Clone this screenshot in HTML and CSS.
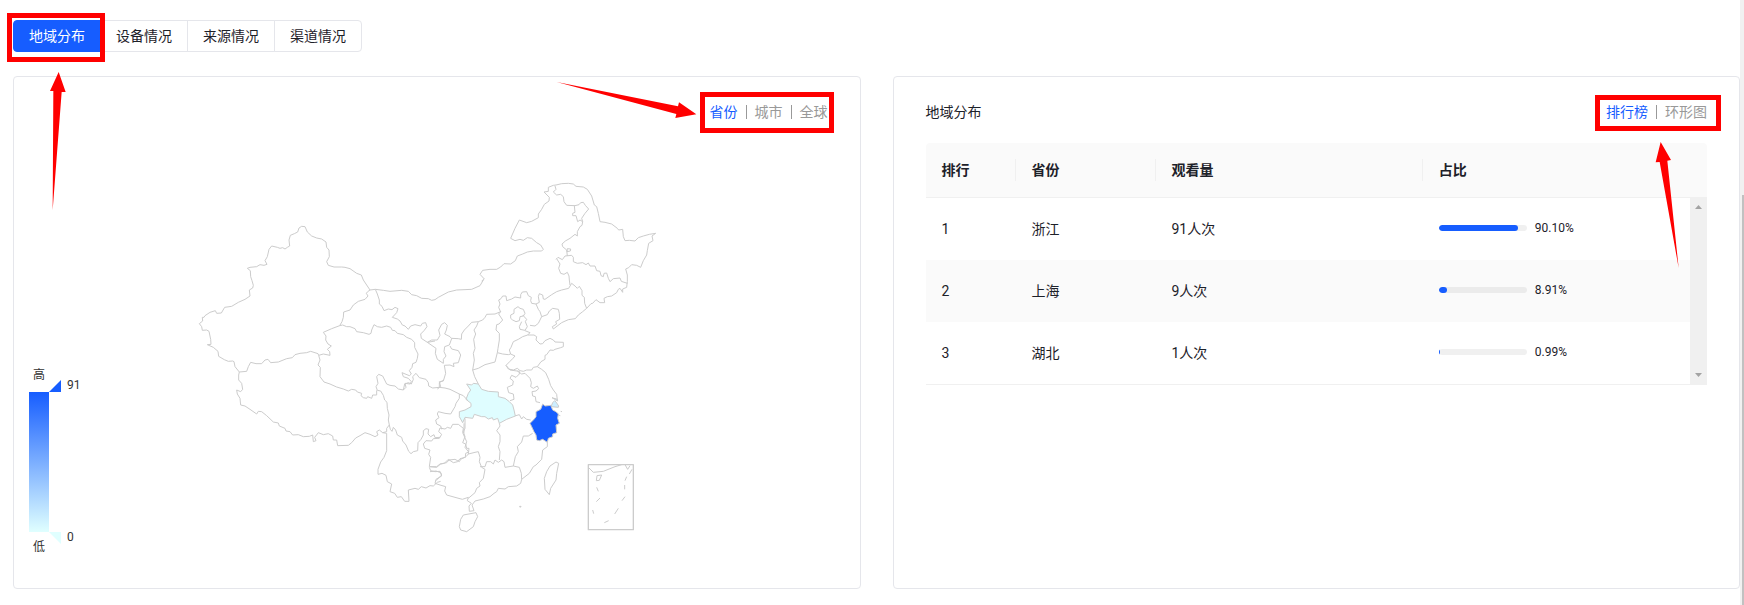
FILE: index.html
```html
<!DOCTYPE html>
<html lang="zh-CN">
<head>
<meta charset="utf-8">
<title>地域分布</title>
<link rel="stylesheet" href="styles.css">
</head>
<body>
<div class="page">
<main class="content">
  <nav class="tabs" aria-label="数据维度">
    <button class="tab tab-active" type="button">地域分布</button>
    <button class="tab" type="button">设备情况</button>
    <button class="tab" type="button">来源情况</button>
    <button class="tab" type="button">渠道情况</button>
    <svg class="mark mark-tabs" width="98" height="198" viewBox="21 39 294 594" aria-hidden="true">
      <rect x="28.5" y="46.5" width="279" height="132"/>
      <path d="M176 216L150 273L160 273L158 630L185 276L197 276Z"/>
    </svg>
  </nav>

  <div class="cards">
    <section class="card">
      <header class="card-head">
        <div class="switch">
          <button class="switch-item switch-on" type="button">省份</button>
          <button class="switch-item" type="button">城市</button>
          <button class="switch-item" type="button">全球</button>
        </div>
        <svg class="mark mark-map" width="279" height="53" viewBox="45 60 837 159" aria-hidden="true">
          <rect x="487.5" y="103.5" width="387" height="108"/>
          <path d="M469 163L406 174L409 162L50 66L414 139L417 127Z"/>
        </svg>
      </header>
      <div class="chart">
        <svg class="legend" width="60" height="190" viewBox="0 0 60 190">
          <defs>
            <linearGradient id="scale" x1="0" y1="0" x2="0" y2="1">
              <stop offset="0" stop-color="#165dff"/>
              <stop offset="1" stop-color="#e0ffff"/>
            </linearGradient>
          </defs>
          <rect x="0" y="26" width="20" height="140" fill="url(#scale)"/>
          <path d="M20 26L32 14V26Z" fill="#165dff"/>
          <path d="M20 166H32V178Z" fill="#e0ffff"/>
          <text x="4" y="13">高</text>
          <text x="4" y="185">低</text>
          <text x="38" y="23">91</text>
          <text x="38" y="175">0</text>
        </svg>
        <svg class="map" width="480" height="370" viewBox="21 0 1440 1110" role="img" aria-label="中国地图">
          <g transform="translate(0 120)">
            <path d="M345 50L335 49 327 54 323 66 313 71 301 76 297 90 299 108 292 112 285 117 278 113 270 115 262 112 245 108 237 118 232 140 225 152 231 163 222 166 210 164 200 170 180 172 172 175 181 182 182 200 186 212 190 226 188 234 178 240 180 258 165 268 145 277 125 289 104 292 94 309 80 310 76 302 60 307 45 317 42 322 37 322 38 333 28 341 35 350 37 361 50 360 57 364 62 388 63 403 52 404 70 412 84 424 86 439 103 449 115 454 128 453 132 455 135 470 148 486 170 484 175 470 182 457 198 461 215 461 225 450 234 448 242 458 265 456 290 446 307 443 315 434 330 430 350 428 362 424 384 431 386 436 400 432 420 436 419 425 412 418 424 408 414 402 407 390 408 378 400 367 425 356 449 347 456 335 460 322 461 306 480 300 490 285 505 274 525 268 534 258 529 250 533 245 540 240 530 225 520 210 514 195 500 190 480 176 465 172 455 171 432 171 415 166 410 155 418 140 417 120 410 112 408 96 395 87 380 84 365 78 352 66Z"/>
            <path d="M148 486L146 495 146 510 155 520 158 538 152 545 140 540 142 552 150 565 152 585 165 588 180 598 200 612 205 604 215 605 230 617 250 636 265 639 268 648 285 655 288 663 300 665 308 675 325 674 340 680 358 679 368 675 370 695 378 692 374 682 385 668 400 674 415 671 428 678 430 690 440 690 443 707 475 706 485 698 497 684 510 677 525 668 540 673 555 680 564 675 560 665 568 660 578 668 590 670"/>
            <path d="M386 436L390 450 384 465 391 472 390 500 402 516 420 522 440 531 460 537 475 543 485 538 497 540 502 546 515 550 513 557 520 563 530 565 533 560 545 565 548 555 560 555 560 541"/>
            <path d="M449 347L458 345 470 350 480 350 495 356 500 365 520 368 537 373 543 370 545 360 552 344 562 350 575 352 590 348 602 352 607 361 615 362 622 370 640 374 650 382 665 388 674 398 674 412 684 432 682 445 678 457 668 461 666 472 658 482 664 492 658 497 636 488 640 500 655 505 664 515 660 522 645 520 648 532 640 540 625 537 615 528 600 526 590 522 578 498 566 493 560 500 564 520 558 530 562 541 572 543 580 556 584 570 591 577 592 595 597 615 595 630 598 645 590 655 590 665 578 668"/>
            <path d="M598 645L601 658 606 664 610 652 617 660 622 675 635 682 638 693 648 705 656 724 663 731 670 725 683 722 684 698 693 688 700 675 700 662 708 656 716 658 714 672 722 680 732 674 735 683 750 682"/>
            <path d="M540 240L556 238 562 252 568 270 568 282 576 289 582 302 595 297 606 299 615 292 624 296 620 308 607 322 622 327 630 333 637 345 645 348 655 358 662 348 675 344 692 348 697 340 707 338 711 350 702 362 692 372 694 385 712 397 735 393"/>
            <path d="M556 238L580 241 600 244 635 241 655 244 665 254 680 257 695 265 715 266 725 271 735 269 745 262 775 246 800 240 845 238 870 227 880 210"/>
          </g>
          <g transform="translate(900 0)">
            <path d="M-25 333L-17 327-30 313-22 301 0 298 20 298 32 291 42 281 62 282 76 272 82 258 98 252 112 246 130 243 155 243 160 238 152 225 140 218 125 205 112 203 100 211 90 208 75 212 62 205 75 175 88 150 110 158 125 154 145 143 145 132 155 118 163 103 177 93 178 82 162 66 175 64 175 52 190 46 198 45 215 41 235 40 250 42 258 49 280 51 292 58 305 78 313 105 320 110 325 130 330 155 345 157 365 162 382 175 386 180 398 178 400 200 405 212 418 211 435 213 445 203 460 198 478 193 497 190 486 198 489 212 476 220 472 242 470 255 460 272 452 292 440 286 425 284 416 293 407 297 412 315 412 335 410 352 398 357 398 367 390 355 385 358 380 368 365 378 352 380 342 385 344 398 330 398 318 389 308 400 303 401 290 415 278 425 265 435 256 446 235 449 215 458 190 477 187 470 200 462 197 455 209 448 208 430 205 418 188 415 178 423 172 434 155 440"/>
            <path d="M195 48L198 58 190 66 200 75 212 73 220 80 222 95 230 106 255 107 267 104 272 98 280 97 286 106 296 117 285 130 275 145 278 155 270 150 263 155 258 137 248 137 248 130 255 127 253 107M278 155L276 166 270 170 262 185 262 198 255 193 240 205 226 213 216 222 218 230 230 240 232 258M232 236L242 237 241 243 231 245Z"/>
            <path d="M198 268L204 262 217 269 225 258 245 256 250 262 250 275 262 280 278 278 288 284 295 279 300 288 315 288 320 302 330 304 333 317 340 320 342 310 350 309 355 325 360 335 370 326 390 324 394 334 412 340M200 266L210 282 206 295 212 310 222 313 232 307 237 318 238 330 240 345"/>
            <path d="M245 340L255 348 262 355 268 349 276 362 276 376 283 382 284 400 290 415M245 340L236 355 215 360 200 365 185 374 165 388 160 387 158 375 148 371 145 380 148 397 138 402 145 418 150 425 155 440 145 460 135 468 120 466"/>
            <path d="M138 402L125 400 122 392 124 382 115 377 110 365 97 366 92 374 92 384 75 381 65 387 50 392 48 378 38 378 33 386 26 390 30 402 26 412 32 426"/>
          </g>
          <g transform="translate(720 300)">
            <path d="M212 125L206 132 218 150 207 162 200 164 198 180 208 190 208 210 204 235 202 248 218 252 235 254 242 252 238 240 243 232 250 215 265 208 278 200 293 195 300 188 285 182"/>
            <path d="M293 195L312 195 320 200 318 210 330 222 338 221 345 212 360 205 370 210 375 216 400 217 400 230 392 233 375 238 370 241 360 240 350 254 345 256 345 268 333 275 322 290"/>
            <path d="M264 110L270 115 280 118 285 130 280 138 270 140 268 152 258 155 248 150 242 145 242 135 252 130 252 118ZM278 135L290 148 286 155 292 170 285 181 270 178 268 170 275 155"/>
            <path d="M242 252L255 258 248 266 240 274 228 286 235 297 250 300 262 295 270 302 280 304 290 300 305 300 310 292 322 290 335 298 347 308 356 328 362 347 370 360 380 373 382 390"/>
            <path d="M145 155L140 168 132 180 137 192 131 208 135 235 130 250 133 270 128 300 145 295 165 284 195 276 202 248M145 155L158 150 165 142 170 133 195 132 212 125M145 155L125 157 115 168 103 180 95 192 94 208 85 206 65 205"/>
            <path d="M-8 217L5 210 22 210 30 196 26 180 35 163 44 158 52 166 49 180 44 192 60 200 65 206 58 225 44 230 42 245 48 258 40 268 40 280 22 268 16 250 18 235Z"/>
            <path d="M60 228L65 237 85 242 92 255 85 278 70 280 72 290 60 285 43 286 47 310 40 333 28 335 32 350 22 357M128 300L134 320 145 342M228 286L240 300 268 304 268 312 258 322 245 316 240 325 250 333 248 345 232 352 236 368 250 372 252 388 240 392"/>
            <path d="M262 303L275 312 285 310 300 325 304 338 302 350 310 355 322 348 326 356 318 363 306 365 308 378 316 380 318 395 330 398M254 438L268 434 275 447 280 440 290 448 302 450M208 460L210 468 200 482 210 495 210 515 205 530 210 545 208 570M308 490L295 498 280 498 275 516 262 530 265 545 256 560 250 588M352 517L352 530 338 540 335 568 318 585 310 590 298 610 275 628M250 588L268 592 274 610 275 628"/>
            <path d="M150 590L165 590 170 575 182 575 190 582 195 570 205 577 215 570 222 575 225 592 250 588M275 628L272 640 260 648 235 650 225 657 205 655 200 665 192 670 180 680 160 687 135 693 126 705 132 722 118 724 117 708 124 700 112 692 115 682 97 688 75 682 50 675 44 663 47 650 30 645 15 640 18 628 35 618 32 608 18 603 0 605"/>
            <path d="M115 685L135 668 140 655 150 648 148 638 160 625 165 598 155 592 148 575 150 562 145 545 135 547 115 552 108 560 92 568 88 575 75 568 57 570 50 578 30 582 20 590 0 590M105 445L105 475 100 485 105 500 98 518 107 522 110 535 117 535 115 552"/>
            <path d="M100 735L138 728 143 740 135 755 130 770 110 785 92 780 88 770 92 748ZM378 576L386 580 380 610 378 630 362 655 358 674 345 658 343 625 350 605 360 588ZM269 709h4v2h-4zM385 435l6 2M392 424l4 1"/>
            <path class="low" d="M110 342L125 345 130 340 145 342 155 358 175 364 205 366 205 380 225 385 238 395 248 405 252 420 256 438 230 448 208 460 203 445 190 450 187 443 175 447 165 440 155 440 133 433 128 445 105 442 98 458 88 440 88 425 105 420 123 410 123 400 108 388 115 370 122 360Z"/>
            <path class="mid" d="M374 392L378 396 386 408 385 412 363 410 368 398ZM366 383L382 388 383 393 374 388Z"/>
            <path class="high" d="M338 402L345 408 362 406 368 420 378 425 385 432 383 445 388 460 378 465 380 488 368 492 368 500 355 505 352 517 338 508 328 512 320 510 318 495 312 485 305 470 300 460 312 448 318 440 318 425 332 418Z"/>
            <path class="frame" d="M475 584H610V779H475Z"/>
            <path d="M475 592L490 607 520 604 555 590 575 584M585 584L593 598 600 587M606 598L598 612M501 617L515 615 508 631 499 632ZM590 620L585 632M584 645V658M500 652L505 664M510 684L499 695M585 680L576 692M488 720L491 731M565 715L554 732M536 752L523 758"/>
          </g>
          <g transform="translate(600 600)">
            <path d="M218 188L220 175 205 163 188 163 182 175 172 172 165 177 150 174 146 185 155 193 148 205 130 206 125 213 108 212 100 222 104 235 120 240 116 253 122 262 118 290 140 292 152 282 163 280 175 268 190 278 203 275 210 266 226 262 227 250 236 246 225 232 230 215ZM222 188L222 160"/>
            <path d="M148 52L165 54 180 58 208 72 220 77 232 90M208 72L208 85 198 100 195 110 182 132 165 130 145 125 142 132 147 143 137 150 140 162 152 168 155 178M40 60L44 42 55 38 64 42 70 28 68 20 78 10 88 23 108 28 115 38 116 48 128 54 148 52 148 38 162 30"/>
          </g>
          <g transform="translate(510 750)">
            <path d="M80 40L80 92 72 112 62 126 54 148 54 163 66 160 78 166 82 185 95 192 90 215 104 220 112 232 124 230 134 244 147 244 145 210 165 205 175 208 184 200 198 204 210 197 220 198 232 187 242 184"/>
            <path d="M208 142L212 152 225 155 240 154 245 165 228 182"/>
          </g>
        </svg>
      </div>
    </section>

    <section class="card">
      <header class="card-head">
        <h2 class="card-title">地域分布</h2>
        <div class="switch">
          <button class="switch-item switch-on" type="button">排行榜</button>
          <button class="switch-item" type="button">环形图</button>
        </div>
        <svg class="mark mark-rank" width="126" height="173" viewBox="735 105 378 519" aria-hidden="true">
          <rect x="742.5" y="112.5" width="363" height="93"/>
          <path d="M932 246L917 307L929 306L986 624L952 302L963 300Z"/>
        </svg>
      </header>
      <div class="ranking">
        <div class="ranking-head">
          <table>
            <colgroup><col class="c-rank"><col class="c-area"><col><col></colgroup>
            <thead><tr><th>排行</th><th>省份</th><th>观看量</th><th>占比</th></tr></thead>
          </table>
        </div>
        <div class="ranking-body">
          <table>
            <colgroup><col class="c-rank"><col class="c-area"><col><col></colgroup>
            <tbody>
              <tr><td>1</td><td>浙江</td><td>91人次</td><td><div class="share"><div class="track"><div class="fill" style="width:90.1%"></div></div><span>90.10%</span></div></td></tr>
              <tr><td>2</td><td>上海</td><td>9人次</td><td><div class="share"><div class="track"><div class="fill" style="width:8.91%"></div></div><span>8.91%</span></div></td></tr>
              <tr><td>3</td><td>湖北</td><td>1人次</td><td><div class="share"><div class="track"><div class="fill" style="width:0.99%"></div></div><span>0.99%</span></div></td></tr>
            </tbody>
          </table>
          <div class="scroller" aria-hidden="true">
            <svg width="7" height="4" viewBox="0 0 7 4"><path d="M0 4L3.5 0L7 4Z"/></svg>
            <svg width="7" height="4" viewBox="0 0 7 4"><path d="M0 0H7L3.5 4Z"/></svg>
          </div>
        </div>
      </div>
    </section>
  </div>
</main>
<div class="page-scroll" aria-hidden="true"><div class="page-thumb"></div></div>
</div>
</body>
</html>
```
FILE: styles.css
```css
* { box-sizing: border-box; }

body {
  margin: 0;
  background: #fff;
  color: #1d2129;
  font: 14px/22px Roboto, "Noto Sans CJK SC", sans-serif;
}

button {
  font: inherit;
  color: inherit;
  background: none;
  border: 0;
  padding: 0;
  cursor: pointer;
}

.page { display: flex; min-height: 100vh; }
.content { flex: 1; min-width: 0; padding: 20px 0 15px 13px; }

.tabs { position: relative; display: flex; width: max-content; }
.tab {
  height: 32px;
  padding: 0 15px;
  border: 1px solid #e5e6eb;
  margin-left: -1px;
  background: #fff;
}
.tab:first-child { margin-left: 0; border-radius: 4px 0 0 4px; }
.tab:nth-child(4) { border-radius: 0 4px 4px 0; }
.tab-active { background: #165dff; border-color: #165dff; color: #fff; }

.mark { position: absolute; pointer-events: none; z-index: 1; }
.mark rect { fill: none; stroke: #f00; stroke-width: 15; }
.mark path { fill: #f00; }
.mark-tabs { left: -6px; top: -7px; }
.mark-map { right: 26px; top: 3px; }
.mark-rank { right: 18px; top: 18px; }

.cards {
  display: grid;
  grid-template-columns: 1fr 1fr;
  gap: 32px;
  margin-top: 24px;
}
.card { min-width: 0; border: 1px solid #e5e6eb; border-radius: 4px; }

.card-head {
  position: relative;
  display: flex;
  align-items: center;
  padding: 24px 32px 0;
}
.card-title { margin: 0; font-size: 14px; font-weight: 400; }
.switch { display: flex; align-items: center; margin-left: auto; color: #999; }
.switch-item { display: flex; align-items: center; line-height: 22px; }
.switch-on { color: #165dff; }
.switch-item + .switch-item::before {
  content: "";
  width: 1px;
  height: 14px;
  margin: 0 8px;
  background: #999;
}

.chart {
  display: grid;
  grid-template-columns: 1fr auto 1fr;
  padding: 47px 15px 48px;
}
.legend { align-self: end; margin-bottom: -16px; }
.legend text { font-size: 12px; fill: #333; }
.map { grid-column: 2; }
.map path { fill: none; stroke: #ccc; stroke-width: 3; stroke-linejoin: round; }
.map .low { fill: #dffdff; }
.map .mid { fill: #cdeeff; }
.map .high { fill: #165dff; }
.map .frame { stroke-width: 4; }

.ranking { margin: 20px 32px 0; }
.ranking table { width: 100%; table-layout: fixed; border-collapse: separate; border-spacing: 0; }
.c-rank { width: 90px; }
.c-area { width: 140px; }
.ranking-head {
  padding-right: 17px;
  background: #fafafa;
  border-bottom: 1px solid #f0f0f0;
  border-radius: 4px 4px 0 0;
}
.ranking th {
  position: relative;
  height: 54px;
  padding: 0 16px;
  text-align: left;
  font-weight: 700;
}
.ranking th:not(:last-child)::after {
  content: "";
  position: absolute;
  right: 0;
  top: 16px;
  width: 1px;
  height: 22px;
  background: #f0f0f0;
}
.ranking-body { display: flex; border-bottom: 1px solid #f0f0f0; }
.ranking td { height: 62px; padding: 0 16px; }
.ranking tr:nth-child(even) td { background: #fafafa; }
.share { display: flex; align-items: center; gap: 8px; font-size: 12px; line-height: 18px; padding-bottom: 3px; }
.track { width: 88px; height: 6px; border-radius: 3px; background: rgba(0, 0, 0, 0.06); overflow: hidden; }
.fill { height: 100%; border-radius: 3px; background: #165dff; }
.scroller {
  flex: none;
  width: 17px;
  display: flex;
  flex-direction: column;
  justify-content: space-between;
  align-items: center;
  padding: 7px 0;
  background: #f0f0f0;
}
.scroller path { fill: #a3a3a3; }

.page-scroll { width: 4px; padding: 195px 0 0 2px; background: #f1f1f1; display: flex; }
.page-thumb { flex: 1; background: #c1c1c1; }
```
